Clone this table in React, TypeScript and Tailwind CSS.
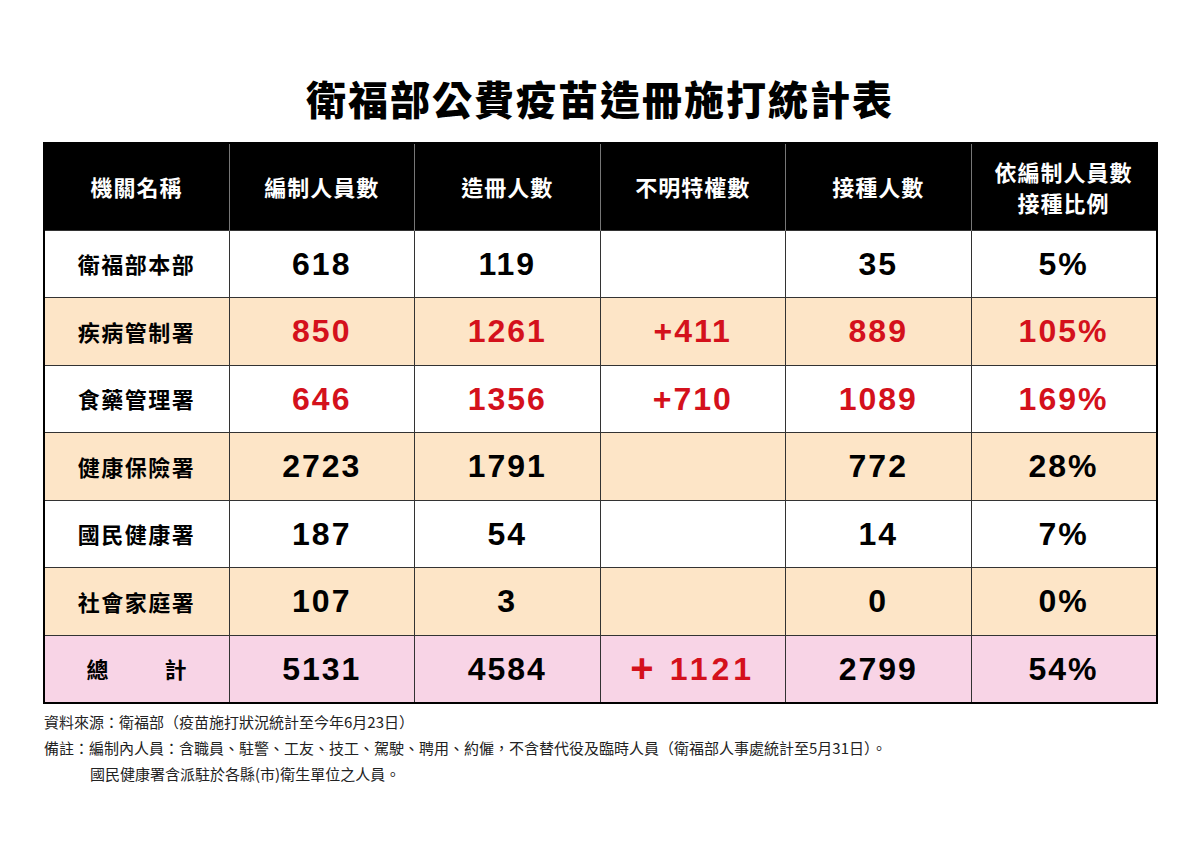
import React from 'react';

type Row = {
  name: React.ReactNode;
  staff: string;
  registered: string;
  unknown: string;
  vaccinated: string;
  ratio: string;
  bg: string;
  red?: boolean;
};

const rows: Row[] = [
  { name: '衛福部本部', staff: '618', registered: '119', unknown: '', vaccinated: '35', ratio: '5%', bg: 'bg-white' },
  { name: '疾病管制署', staff: '850', registered: '1261', unknown: '+411', vaccinated: '889', ratio: '105%', bg: 'bg-[#fde5c7]', red: true },
  { name: '食藥管理署', staff: '646', registered: '1356', unknown: '+710', vaccinated: '1089', ratio: '169%', bg: 'bg-white', red: true },
  { name: '健康保險署', staff: '2723', registered: '1791', unknown: '', vaccinated: '772', ratio: '28%', bg: 'bg-[#fde5c7]' },
  { name: '國民健康署', staff: '187', registered: '54', unknown: '', vaccinated: '14', ratio: '7%', bg: 'bg-white' },
  { name: '社會家庭署', staff: '107', registered: '3', unknown: '', vaccinated: '0', ratio: '0%', bg: 'bg-[#fde5c7]' },
];

const cjk = "font-['Noto_Sans_CJK_TC','Noto_Sans',sans-serif]";
const num = "font-['Liberation_Sans',Arial,sans-serif] font-bold text-[32px] tracking-[2px]";
const cell = 'border border-[#333] text-center align-middle';

export default function App() {
  return (
    <div className={`w-[1200px] h-[848px] bg-white pt-[73px] ${cjk}`}>
      <h1 className="text-center text-[40px] leading-[50px] font-black text-black tracking-[2px] mb-[19px]">
        衛福部公費疫苗造冊施打統計表
      </h1>

      <table className="mx-auto w-[1115px] table-fixed border-collapse border-2 border-black">
        <thead>
          <tr className="h-[87px] bg-black text-white">
            {['機關名稱', '編制人員數', '造冊人數', '不明特權數', '接種人數'].map(h => (
              <th key={h} className="border-x border-[#777] text-[22px] font-bold tracking-[1px]">
                {h}
              </th>
            ))}
            <th className="border-x border-[#777] text-[22px] font-bold leading-[31px] tracking-[1px]">
              依編制人員數
              <br />
              接種比例
            </th>
          </tr>
        </thead>
        <tbody>
          {rows.map((r, i) => (
            <tr key={i} className={`h-[67.5px] ${r.bg}`}>
              <td className={`${cell} text-[22px] font-bold text-black tracking-[1.5px]`}>{r.name}</td>
              <td className={`${cell} ${num} ${r.red ? 'text-[#d4111c]' : 'text-black'}`}>{r.staff}</td>
              <td className={`${cell} ${num} ${r.red ? 'text-[#d4111c]' : 'text-black'}`}>{r.registered}</td>
              <td className={`${cell} ${num} text-[#d4111c]`}>{r.unknown}</td>
              <td className={`${cell} ${num} ${r.red ? 'text-[#d4111c]' : 'text-black'}`}>{r.vaccinated}</td>
              <td className={`${cell} ${num} ${r.red ? 'text-[#d4111c]' : 'text-black'}`}>{r.ratio}</td>
            </tr>
          ))}
          <tr className="h-[67.5px] bg-[#f8d4e6]">
            <td className={`${cell} text-[22px] font-bold text-black`}>
              <div className="flex justify-between px-[42px]">
                <span>總</span>
                <span>計</span>
              </div>
            </td>
            <td className={`${cell} ${num} text-black`}>5131</td>
            <td className={`${cell} ${num} text-black`}>4584</td>
            <td className={`${cell} ${num} text-[#d4111c]`}>
              <div className="flex items-center justify-center">
                <span className="text-[40px] leading-none mr-[14px] -translate-y-[1px]">+</span>
                <span className="tracking-[4px]">1121</span>
              </div>
            </td>
            <td className={`${cell} ${num} text-black`}>2799</td>
            <td className={`${cell} ${num} text-black`}>54%</td>
          </tr>
        </tbody>
      </table>

      <div className="ml-[44px] mt-[5px] text-[15px] leading-[26px] text-[#222]">
        <p>資料來源：衛福部（疫苗施打狀況統計至今年6月23日）</p>
        <p>備註：編制內人員：含職員、駐警、工友、技工、駕駛、聘用、約僱，不含替代役及臨時人員（衛福部人事處統計至5月31日）。</p>
        <p className="pl-[46px]">國民健康署含派駐於各縣(市)衛生單位之人員。</p>
      </div>
    </div>
  );
}
